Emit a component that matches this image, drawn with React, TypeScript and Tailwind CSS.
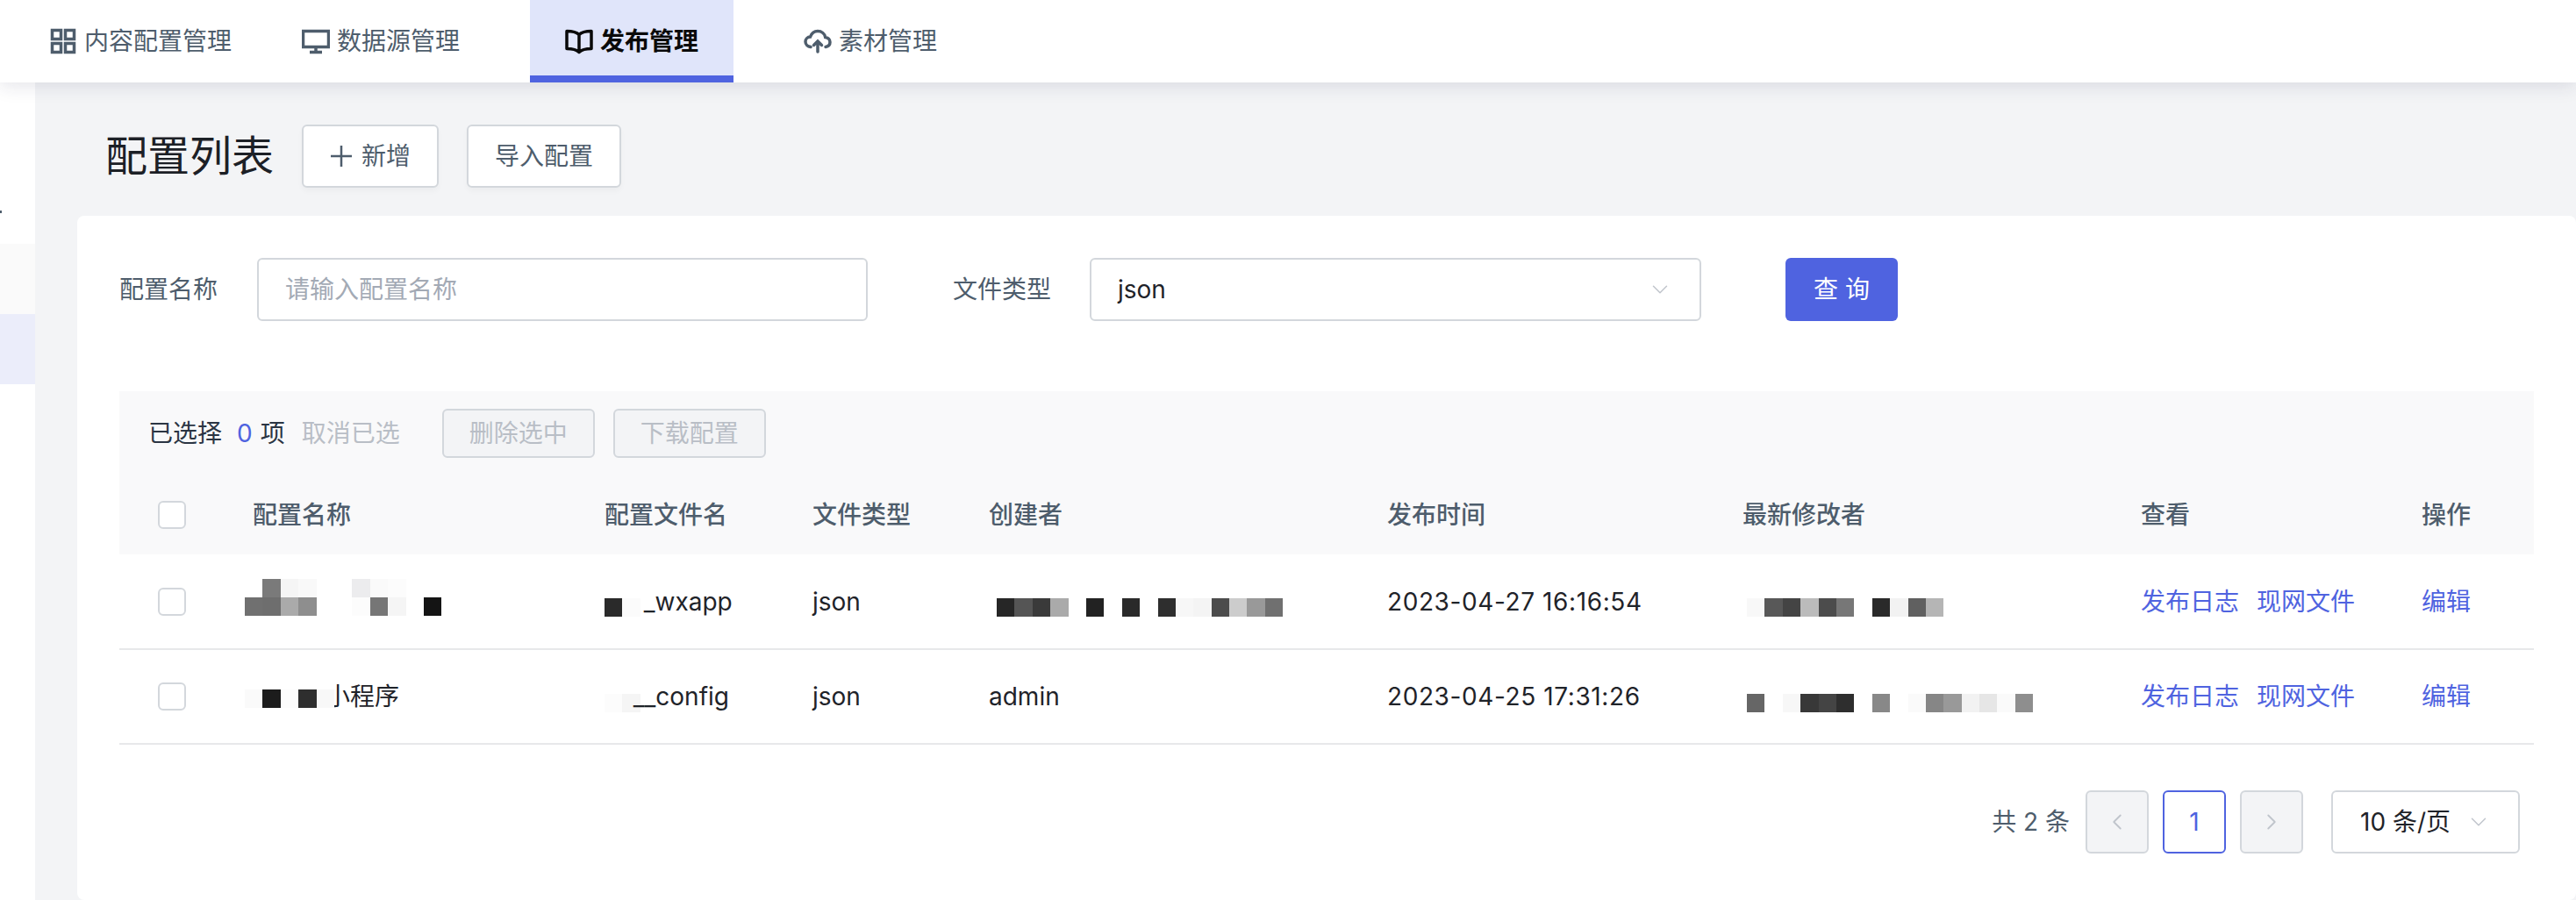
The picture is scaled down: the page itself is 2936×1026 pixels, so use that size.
import { ChevronDown, ChevronLeft, ChevronRight } from "lucide-react";

// Pixelated blocks that cover the blanked-out names in the table
const Mosaic = ({ rows, className = "" }: { rows: string[][]; className?: string }) => (
  <span className={`inline-flex flex-col align-middle ${className}`}>
    {rows.map((row, i) => (
      <span key={i} className="flex">
        {row.map((color, j) => (
          <span key={j} className="block h-[21px] w-[20.4px]" style={{ backgroundColor: color }} />
        ))}
      </span>
    ))}
  </span>
);

const GridIcon = () => (
  <svg width="30" height="30" viewBox="0 0 30 30" fill="none" stroke="currentColor" strokeWidth="3.5">
    <rect x="2.5" y="2.5" width="10" height="10" />
    <rect x="17.5" y="2.5" width="10" height="10" />
    <rect x="2.5" y="17.5" width="10" height="10" />
    <rect x="17.5" y="17.5" width="10" height="10" />
  </svg>
);

const MonitorIcon = () => (
  <svg width="32" height="30" viewBox="0 0 32 30" fill="none" stroke="currentColor" strokeWidth="3.5">
    <rect x="1.5" y="3.5" width="29" height="18" />
    <path d="M16 22v5M9 27.5h14" />
  </svg>
);

const BookIcon = () => (
  <svg width="32" height="30" viewBox="0 0 32 30" fill="none" stroke="currentColor" strokeWidth="3.5" strokeLinejoin="round">
    <path d="M16 7.5C13 4.500 8 3.500 2 3.500v20c6 0 11 1 14 4 3-3 8-4 14-4v-20c-6 0-11 1-14 4zM16 7.500v20" />
  </svg>
);

const CloudIcon = () => (
  <svg width="32" height="30" viewBox="0 0 32 30" fill="none" stroke="currentColor" strokeWidth="3.5" strokeLinecap="round">
    <path d="M8 21.500C4.500 21 2 18.500 2 15.500c0-3 2.500-5.500 5.500-5.500C9 6 12.500 3.500 16 3.500c4.500 0 8 3 8.700 7 3 .3 5.300 2.500 5.300 5.500 0 2.800-2 5-5 5.500" />
    <path d="M16 27V15M11.500 19.500 16 15l4.500 4.500" />
  </svg>
);

const tabs = [
  { name: "内容配置管理", icon: <GridIcon />, box: "ml-[17px] px-[40px] gap-[9px]", active: false },
  { name: "数据源管理", icon: <MonitorIcon />, box: "px-[40px] gap-[8px]", active: false },
  { name: "发布管理", icon: <BookIcon />, box: "ml-[40px] px-[40px] gap-[8px]", active: true },
  { name: "素材管理", icon: <CloudIcon />, box: "ml-[40px] px-[40px] gap-[8px]", active: false },
];

const columns = ["", "配置名称", "配置文件名", "文件类型", "创建者", "发布时间", "最新修改者", "查看", "操作"];

const Checkbox = () => (
  <span className="block h-[32px] w-[32px] rounded-[6px] border-2 border-[#d3d7dc] bg-white" />
);

const RowLinks = () => (
  <>
    <td className="text-[#4f63e0]">
      <a className="mr-[20px]">发布日志</a>
      <a>现网文件</a>
    </td>
    <td className="text-[#4f63e0]">
      <a>编辑</a>
    </td>
  </>
);

export default function App() {
  return (
    <div className="flex h-screen flex-col overflow-hidden bg-[#f3f4f6] font-['Inter','Noto_Sans_CJK_SC',sans-serif] text-[28px] text-[#1f2329]">
      {/* Top nav */}
      <div className="relative z-10 flex h-[94px] shrink-0 bg-white shadow-[0_4px_20px_rgba(30,35,70,0.12)]">
        {tabs.map((tab) => (
          <div
            key={tab.name}
            className={`relative flex items-center ${tab.box} ${
              tab.active ? "bg-[#e0e5fa] font-semibold text-[#0a0a0a]" : "text-[#4e5d6c]"
            }`}
          >
            {tab.icon}
            {tab.name}
            {tab.active && <span className="absolute inset-x-0 bottom-0 h-[8px] bg-[#4f63e0]" />}
          </div>
        ))}
      </div>

      <div className="flex min-h-0 flex-1">
        {/* Collapsed sidebar */}
        <div className="flex w-[40px] shrink-0 flex-col bg-white">
          <span className="mt-[146px] h-[3px] w-[2px] bg-[#4e5d6c]" />
          <div className="mt-[35px] h-[80px] bg-[#fafafa]" />
          <div className="h-[80px] bg-[#ebedfa]" />
        </div>

        <div className="flex min-w-0 flex-1 flex-col pl-[48px] pt-[48px]">
          {/* Title row */}
          <div className="flex items-center gap-[32px] pl-[32px]">
            <h1 className="text-[48px] font-normal leading-[72px] text-[#1c2026]">配置列表</h1>
            <button className="flex h-[72px] w-[156px] items-center justify-center gap-[10px] rounded-[6px] border-2 border-[#d3d7dc] bg-white text-[#4e5d6c] shadow-[0_4px_6px_rgba(0,0,0,0.03)]">
              <svg width="26" height="26" viewBox="0 0 26 26" stroke="currentColor" strokeWidth="2.500">
                <path d="M13 1v24M1 13h24" />
              </svg>
              新增
            </button>
            <button className="h-[72px] w-[176px] rounded-[6px] border-2 border-[#d3d7dc] bg-white text-[#4e5d6c] shadow-[0_4px_6px_rgba(0,0,0,0.03)]">
              导入配置
            </button>
          </div>

          {/* Card */}
          <div className="mt-[32px] flex-1 rounded-[8px] bg-white px-[48px] pt-[48px]">
            {/* Filter form */}
            <div className="flex items-center">
              <label className="w-[157px] text-[#4e5d6c]">配置名称</label>
              <input
                className="h-[72px] w-[696px] rounded-[6px] border-2 border-[#d3d7dc] pl-[30px] outline-none placeholder:text-[#a3aab5]"
                placeholder="请输入配置名称"
              />
              <label className="ml-[97px] w-[156px] text-[#4e5d6c]">文件类型</label>
              <div className="flex h-[72px] w-[697px] items-center justify-between rounded-[6px] border-2 border-[#d3d7dc] pl-[30px] pr-[30px]">
                json
                <ChevronDown size={30} strokeWidth={1.2} className="text-[#c0c5cc]" />
              </div>
              <button className="ml-[96px] h-[72px] w-[128px] rounded-[6px] bg-[#4f63e0] text-white">查 询</button>
            </div>

            {/* Table toolbar */}
            <div className="mt-[80px] flex h-[96px] items-center bg-[#f9f9fa] pl-[33px] text-[#2b3543]">
              <span>已选择</span>
              <span className="ml-[17px] text-[#4f63e0]">0</span>
              <span className="ml-[9px]">项</span>
              <span className="ml-[19px] text-[#b9bec6]">取消已选</span>
              <button className="ml-[48px] h-[56px] w-[174px] rounded-[6px] border-2 border-[#d3d7dc] bg-[#f3f4f6] text-[#b9bec6]">
                删除选中
              </button>
              <button className="ml-[21px] h-[56px] w-[174px] rounded-[6px] border-2 border-[#d3d7dc] bg-[#f3f4f6] text-[#b9bec6]">
                下载配置
              </button>
            </div>

            {/* Table */}
            <table className="w-full table-fixed border-collapse text-left">
              <colgroup>
                <col className="w-[152px]" />
                <col className="w-[401px]" />
                <col className="w-[237px]" />
                <col className="w-[201px]" />
                <col className="w-[454px]" />
                <col className="w-[405px]" />
                <col className="w-[454px]" />
                <col className="w-[320px]" />
                <col />
              </colgroup>
              <thead>
                <tr className="h-[90px] bg-[#f9f9fa] text-[#4e5d6c]">
                  {columns.map((col, i) => (
                    <th key={i} className={`font-medium ${i === 0 ? "pl-[44px]" : ""}`}>
                      {i === 0 ? <Checkbox /> : col}
                    </th>
                  ))}
                </tr>
              </thead>
              <tbody>
                <tr className="h-[108px] border-b-2 border-[#e7e8ea]">
                  <td className="pl-[44px]">
                    <Checkbox />
                  </td>
                  <td>
                    <Mosaic
                      className="-ml-[9px] mb-[10px]"
                      rows={[
                        ["#ffffff", "#7a7a7a", "#f5f5f5", "#f9f9f9", "#ffffff", "#ffffff", "#ececee", "#fafafa", "#fcfcfc", "#ffffff", "#ffffff"],
                        ["#707070", "#6e6e6e", "#aaaaaa", "#8e8e8e", "#ffffff", "#ffffff", "#fcfcfc", "#767676", "#f5f5f5", "#ffffff", "#141414"],
                      ]}
                    />
                  </td>
                  <td>
                    <Mosaic className="mt-[10px]" rows={[["#2a2a2a", "#fbfbfb"]]} />
                    <span className="ml-[4px]">_wxapp</span>
                  </td>
                  <td>json</td>
                  <td>
                    <Mosaic
                      className="ml-[9px] mt-[10px]"
                      rows={[["#262626", "#555555", "#3a3a3a", "#aaaaaa", "#ffffff", "#222222", "#ffffff", "#2a2a2a", "#ffffff", "#2e2e2e", "#f7f7f7", "#f4f4f4", "#4c4c4c", "#cccccc", "#999999", "#707070"]]}
                    />
                  </td>
                  <td className="tracking-[0.6px]">2023-04-27 16:16:54</td>
                  <td>
                    <Mosaic
                      className="ml-[5px] mt-[10px]"
                      rows={[["#f8f8f8", "#585858", "#444444", "#bbbbbb", "#4c4c4c", "#777777", "#ffffff", "#2a2a2a", "#f2f2f2", "#606060", "#b5b5b5"]]}
                    />
                  </td>
                  <RowLinks />
                </tr>
                <tr className="h-[108px] border-b-2 border-[#e7e8ea]">
                  <td className="pl-[44px]">
                    <Checkbox />
                  </td>
                  <td>
                    <span className="flex items-center">
                      <Mosaic className="relative -ml-[9px] mt-[4px]" rows={[["#fafafa", "#1c1c1c", "#fcfcfc", "#2e2e2e", "#f8f8f8"]]} />
                      <span className="-ml-[10px]">小程序</span>
                    </span>
                  </td>
                  <td>
                    <Mosaic className="mt-[10px]" rows={[["#fcfcfc", "#f5f5f5"]]} />
                    <span className="-ml-[8px]">__config</span>
                  </td>
                  <td>json</td>
                  <td>admin</td>
                  <td className="tracking-[0.6px]">2023-04-25 17:31:26</td>
                  <td>
                    <Mosaic
                      className="ml-[5px] mt-[10px]"
                      rows={[["#666666", "#ffffff", "#f7f7f7", "#383838", "#444444", "#2e2e2e", "#ffffff", "#888888", "#ffffff", "#fafafa", "#868686", "#999999", "#f2f2f2", "#e6e6e6", "#fafafa", "#8e8e8e"]]}
                    />
                  </td>
                  <RowLinks />
                </tr>
              </tbody>
            </table>

            {/* Pagination */}
            <div className="mt-[52px] flex items-center justify-end pr-[16px]">
              <span className="text-[#4e5d6c]">共 2 条</span>
              <button className="ml-[18px] flex h-[72px] w-[72px] items-center justify-center rounded-[6px] border-2 border-[#d3d7dc] bg-[#f3f4f6] text-[#c0c5cc]">
                <ChevronLeft size={30} strokeWidth={1.5} />
              </button>
              <button className="ml-[16px] h-[72px] w-[72px] rounded-[6px] border-2 border-[#4f63e0] text-[#4f63e0]">1</button>
              <button className="ml-[16px] flex h-[72px] w-[72px] items-center justify-center rounded-[6px] border-2 border-[#d3d7dc] bg-[#f3f4f6] text-[#c0c5cc]">
                <ChevronRight size={30} strokeWidth={1.5} />
              </button>
              <div className="ml-[32px] flex h-[72px] w-[215px] items-center justify-between rounded-[6px] border-2 border-[#d3d7dc] pl-[31px] pr-[30px]">
                10 条/页
                <ChevronDown size={30} strokeWidth={1.2} className="text-[#c0c5cc]" />
              </div>
            </div>
          </div>
        </div>
      </div>
    </div>
  );
}
